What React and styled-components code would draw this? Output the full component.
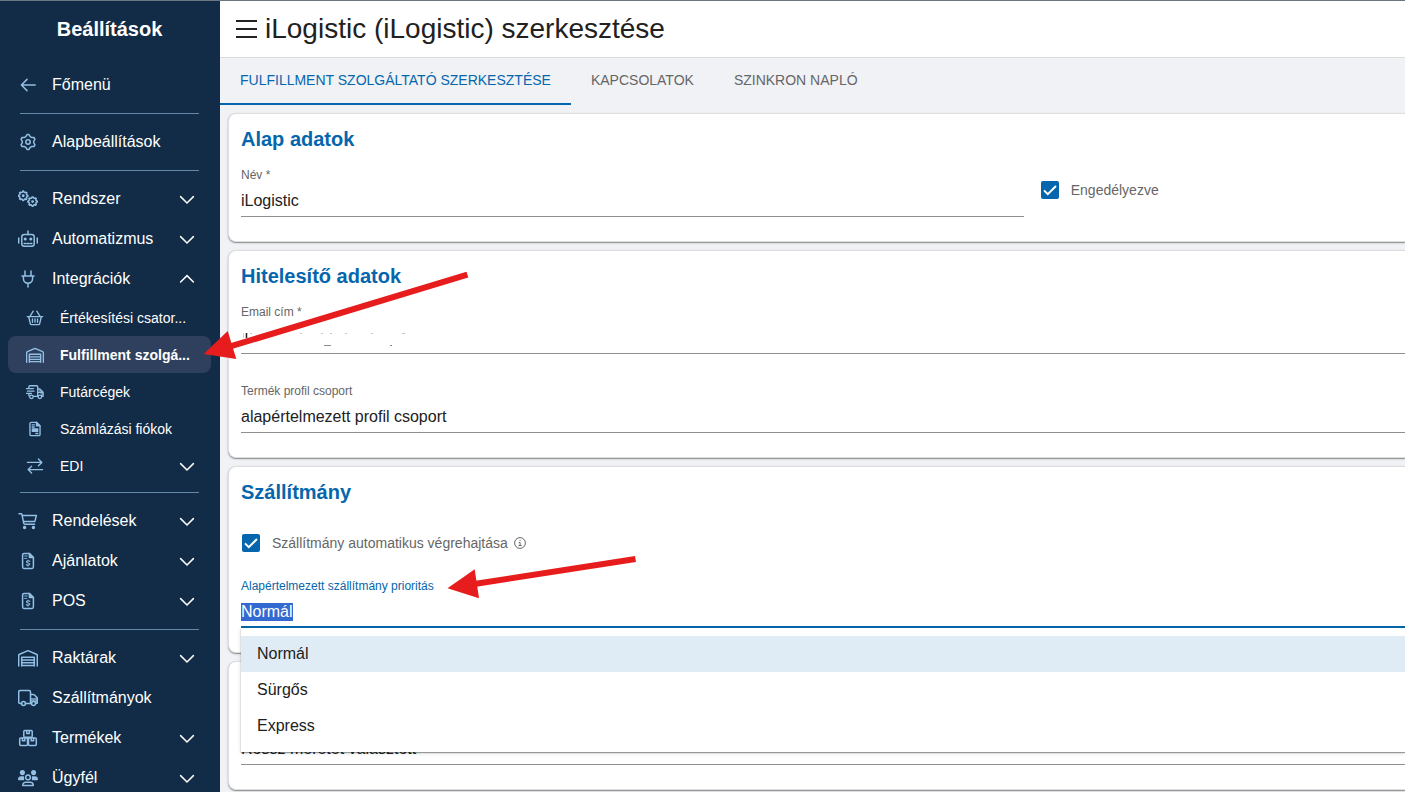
import React, { useEffect, useRef } from "react";
import styled, { createGlobalStyle, css } from "styled-components";

const COLOR = {
  navy: "#122b46",
  navyActive: "#2f3f5e",
  navLine: "#6488a8",
  navIcon: "#93c0e4",
  blue: "#0566ad",
  page: "#f0f2f6",
  text: "#212121",
  gray: "#666",
  line: "#8f8f8f",
  red: "#e71d1d",
}

const FONT = `"Liberation Sans", Arial, sans-serif`

/* ---------- icons, all on a 20x20 grid ---------- */

const gearPoints = (cx, cy, r, teeth) => {
  const pts = []
  const steps = teeth * 4
  for (let i = 0; i < steps; i++) {
    const radius = i % 4 < 2 ? r : r * 0.77
    const a = ((i - 0.5) / steps) * Math.PI * 2 - Math.PI / 2
    pts.push(`${(cx + radius * Math.cos(a)).toFixed(2)},${(cy + radius * Math.sin(a)).toFixed(2)}`)
  }
  return pts.join(" ")
}

const ICONS = {
  back: <path d="M17.2 10H3.4M9 4.4 3.4 10 9 15.6" />,
  gear: <>
    <polygon points={gearPoints(10, 10, 7.5, 6)} />
    <circle cx="10" cy="10" r="2.2" />
  </>,
  gears: <>
    <polygon points={gearPoints(5.2, 6.8, 4.7, 8)} />
    <circle cx="5.2" cy="6.8" r=".7" fill="currentColor" />
    <polygon points={gearPoints(14.6, 12.6, 4.7, 8)} />
    <circle cx="14.6" cy="12.6" r=".7" fill="currentColor" />
  </>,
  robot: <>
    <rect x="3.8" y="5.6" width="12.4" height="11.6" rx="2.4" />
    <path d="M10 2v3.4M.7 9v5M19.3 9v5M6.2 14.4h1.6M9.2 14.4h1.6M12.2 14.4h1.6" />
    <circle cx="7.2" cy="10" r=".8" fill="currentColor" />
    <circle cx="12.8" cy="10" r=".8" fill="currentColor" />
  </>,
  plug: <path d="M7 2v4.6M13 2v4.6M4 7h12M5.4 7v2.6a4.6 4.6 0 0 0 9.2 0V7M10 14.4V18" />,
  basket: <>
    <path d="M1.4 8.4h17.2M3 8.6l1.8 7.6a1.5 1.5 0 0 0 1.4 1.2h7.6a1.5 1.5 0 0 0 1.4-1.2L17 8.6M4.4 8.2 8 2.4M15.6 8.2 12 2.4" />
    <path d="M7.2 11v3.8M10 11v3.8M12.8 11v3.8" />
  </>,
  warehouse: <path d="M.7 18V7.6c0-.6.4-1.1.9-1.3L10 2.6l8.4 3.7c.5.2.9.7.9 1.3V18M3.7 18V9.2h12.6V18M3.7 12h12.6M3.7 14.8h12.6M3.7 17.4h12.6" />,
  truckFast: <>
    <path d="M3.2 5.2V4.2c0-.7.5-1.2 1.2-1.2h7.4c.7 0 1.2.5 1.2 1.2v10.6H8.4M3.2 11.6v2.6M.6 6.2h7.6M1.6 9h7.4M.6 11.6h5.4" />
    <path d="M13 6.6h2.4l3.6 3.6v4.6h-1.2M13 10.4h6" fill="currentColor" fillOpacity=".55" />
    <circle cx="6" cy="15.4" r="2" />
    <circle cx="15.4" cy="15.4" r="2" />
  </>,
  invoice: <>
    <path d="M11.6 2.6H5.8c-.8 0-1.4.6-1.4 1.4v12c0 .8.6 1.4 1.4 1.4h8.4c.8 0 1.4-.6 1.4-1.4V6.6z" />
    <path d="M11.6 2.6v4h4z" fill="currentColor" />
    <path d="M6.8 5.4h2.4M6.8 7.8h2.4M11 15h2.2" />
    <rect x="7" y="10" width="6" height="2.6" fill="currentColor" />
  </>,
  exchange: <path d="M1.6 6h16M13.8 2.2 17.6 6l-3.8 3.8M18.4 14h-16M6.2 10.2 2.4 14l3.8 3.8" />,
  cart: <>
    <path d="M1 2.7h2.1c.4 0 .7.3.8.7l1.9 9c.1.5.5.8 1 .8h9.800M4.200 4.400h14.200l-1.600 6.200H5.500" />
    <circle cx="6.600" cy="16.600" r="1" fill="currentColor" />
    <circle cx="15.400" cy="16.600" r="1" fill="currentColor" />
  </>,
  fileDollar: <>
    <path d="M11.4 2.6H6c-.8 0-1.4.6-1.4 1.4v12c0 .8.6 1.4 1.4 1.4h8c.8 0 1.4-.6 1.4-1.4V6.6z" />
    <path d="M11.4 2.6v4h4z" fill="currentColor" />
    <path d="M6.6 5h2.6M6.6 7.4h2.2" strokeWidth=".9" />
    <path d="M11.9 10.2c-1-.5-3.4-.6-3.4.7 0 1.4 3.3.7 3.3 2.2 0 1.3-2.4 1.2-3.5.6M10.1 9v.8M10.1 14.1v.9" strokeWidth="1.1" />
  </>,
  truck: <>
    <path d="M3.6 15.4H2c-.7 0-1.3-.6-1.3-1.3V3.9c0-.7.6-1.3 1.3-1.3h9.2c.7 0 1.3.6 1.3 1.3v11.5H7.4" />
    <path d="M12.6 6.4h2.6c.4 0 .7.2 1 .4l2.6 2.6c.3.3.5.6.5 1v4.8h-.8M12.6 15.4h1" />
    <path d="M13 10h6.2v4.8h-1.4a2.8 2.8 0 0 0-4.8-.6z" fill="currentColor" fillOpacity=".7" stroke="none" />
    <circle cx="5.5" cy="15.6" r="2" />
    <circle cx="15.5" cy="15.6" r="2" />
  </>,
  boxes: <>
    <rect x="5.8" y="2.6" width="8.4" height="6.6" rx="1" />
    <rect x="1.7" y="10" width="7.8" height="7.4" rx="1" />
    <rect x="10.5" y="10" width="7.8" height="7.4" rx="1" />
    <path d="M8.7 2.8v2.6h2.6V2.8M4.4 10.2v2.6h2.4v-2.6M13.2 10.2v2.6h2.4v-2.6" />
  </>,
  users: <>
    <circle cx="4.4" cy="4.6" r="1.8" fill="currentColor" />
    <circle cx="15.6" cy="4.6" r="1.8" fill="currentColor" />
    <path d="M.8 11.4c0-1.6 1-2.5 2.4-2.5h2.2v2.5zM19.2 11.4c0-1.6-1-2.5-2.4-2.5h-2.2v2.5z" fill="currentColor" />
    <circle cx="10" cy="9.4" r="2.3" />
    <path d="M4.700 17.400c0-2 1.400-3.200 3.200-3.200h4.200c1.800 0 3.200 1.200 3.200 3.200z" />
  </>,
}

const Svg = styled.svg`
  display: block;
  flex: none;
  fill: none;
  stroke: currentColor;
  stroke-width: 1.5;
  stroke-linecap: round;
  stroke-linejoin: round;
`

const Icon = ({ name, size = 20 }) =>
  <Svg width={size} height={size} viewBox="0 0 20 20" aria-hidden="true">{ICONS[name]}</Svg>

const Chevron = ({ open }) =>
  <Arrow width="16" height="16" viewBox="0 0 16 16" aria-hidden="true">
    <path d={open ? "M1.600 11 8 4.600 14.400 11" : "M1.600 5.600 8 12l6.400-6.400"} />
  </Arrow>

/* ---------- navigation ---------- */

const NAV = [
  [{ icon: "back", label: "Főmenü" }],
  [{ icon: "gear", label: "Alapbeállítások" }],
  [
    { icon: "gears", label: "Rendszer", expandable: true },
    { icon: "robot", label: "Automatizmus", expandable: true },
    {
      icon: "plug", label: "Integrációk", expandable: true, open: true,
      children: [
        { icon: "basket", label: "Értékesítési csator..." },
        { icon: "warehouse", label: "Fulfillment szolgá...", active: true },
        { icon: "truckFast", label: "Futárcégek" },
        { icon: "invoice", label: "Számlázási fiókok" },
        { icon: "exchange", label: "EDI", expandable: true },
      ],
    },
  ],
  [
    { icon: "cart", label: "Rendelések", expandable: true },
    { icon: "fileDollar", label: "Ajánlatok", expandable: true },
    { icon: "fileDollar", label: "POS", expandable: true },
  ],
  [
    { icon: "warehouse", label: "Raktárak", expandable: true },
    { icon: "truck", label: "Szállítmányok" },
    { icon: "boxes", label: "Termékek", expandable: true },
    { icon: "users", label: "Ügyfél", expandable: true },
  ],
]

const NavEntry = ({ item, sub }) => {
  const content = <>
    <NavIcon><Icon name={item.icon} size={sub ? 18 : 20} /></NavIcon>
    <NavLabel>{item.label}</NavLabel>
    {item.expandable ? <Chevron open={item.open} /> : null}
  </>
  return (
    <li>
      {item.expandable
        ? <NavButton type="button" $sub={sub} aria-expanded={!!item.open}>{content}</NavButton>
        : <NavLink href="#" $sub={sub} $active={item.active}>{content}</NavLink>}
      {item.children
        ? <NavList>{item.children.map(c => <NavEntry key={c.label} item={c} sub />)}</NavList>
        : null}
    </li>
  )
}

const Sidebar = () =>
  <Side>
    <SideTitle>Beállítások</SideTitle>
    <nav>
      {NAV.map((group, i) =>
        <NavGroup key={i}>{group.map(item => <NavEntry key={item.label} item={item} />)}</NavGroup>
      )}
    </nav>
  </Side>

/* ---------- form parts ---------- */

const TextField = ({ id, label, value }) =>
  <Field>
    <Label htmlFor={id}>{label}</Label>
    <Input id={id} type="text" defaultValue={value} />
  </Field>

const CheckField = ({ id, label, children }) =>
  <CheckRow>
    <CheckBox>
      <input id={id} type="checkbox" defaultChecked />
      <svg width="18" height="18" viewBox="0 0 18 18" aria-hidden="true">
        <path d="M3 9.400 6.800 13.200 15 5" fill="none" stroke="#fff" strokeWidth="2" />
      </svg>
    </CheckBox>
    <CheckLabel htmlFor={id}>{label}</CheckLabel>
    {children}
  </CheckRow>

const InfoIcon = () =>
  <svg width="12" height="12" viewBox="0 0 12 12" fill="none" stroke={COLOR.gray} aria-hidden="true">
    <circle cx="6" cy="6" r="5.400" />
    <path d="M4.800 5.400h1.300v3M4.600 8.500h3M5.600 3.400h1" />
  </svg>

// the address is wiped out, only the tips of the letters are left
const ErasedText = () =>
  <Erased width="180" height="16" viewBox="0 0 180 16" aria-hidden="true">
    <path d="M2.500 1v5" stroke="#b9d6ee" />
    <path d="M5.500 1v5" stroke="#222" strokeWidth="1.500" />
    <path d="M9 1.500h2M59 1.500h2M80 1.500h2M89 1.500h2M104 1.500h2M130 1.500h2M161 1.500h3" stroke="#c6c6c6" />
    <path d="M83 13.500h7M149 13.500h2" stroke="#8a8a8a" />
  </Erased>

const PRIORITIES = ["Normál", "Sürgős", "Express"]

const PriorityField = () => {
  const input = useRef(null)

  useEffect(() => {
    input.current.focus({ preventScroll: true })
    input.current.select()
  }, [])

  return (
    <Field>
      <Label htmlFor="priority" $focused>Alapértelmezett szállítmány prioritás</Label>
      <Input
        id="priority"
        ref={input}
        type="text"
        role="combobox"
        aria-expanded="true"
        aria-controls="priority-list"
        defaultValue={PRIORITIES[0]}
        $focused
      />
      <Options id="priority-list" role="listbox">
        {PRIORITIES.map((p, i) =>
          <Option key={p} role="option" aria-selected={i === 0}>{p}</Option>
        )}
      </Options>
    </Field>
  )
}

const RedArrows = () =>
  <Overlay width="660" height="620" viewBox="0 0 660 620" aria-hidden="true">
    <g fill={COLOR.red} stroke={COLOR.red}>
      <path d="M231 346.200 467.400 274.700" strokeWidth="6" />
      <path d="M203.700 354 227.700 331l8.600 28z" stroke="none" />
      <path d="M476 583.800 635.500 559" strokeWidth="6" />
      <path d="M447.500 588.300 474.700 569.300l4.300 29z" stroke="none" />
    </g>
  </Overlay>

export default function App () {
  return (
    <>
      <GlobalStyle />
      <Page>
        <Sidebar />
        <Main>
          <Header>
            <MenuButton type="button" aria-label="Menü">
              <svg width="21" height="18" viewBox="0 0 21 18" aria-hidden="true">
                <path d="M0 1h21M0 9h21M0 17h21" stroke={COLOR.text} strokeWidth="2" />
              </svg>
            </MenuButton>
            <PageTitle>iLogistic (iLogistic) szerkesztése</PageTitle>
          </Header>
          <Tabs role="tablist">
            <Tab type="button" role="tab" aria-selected="true" $active>Fulfillment szolgáltató szerkesztése</Tab>
            <Tab type="button" role="tab" aria-selected="false">Kapcsolatok</Tab>
            <Tab type="button" role="tab" aria-selected="false">Szinkron napló</Tab>
          </Tabs>
          <Cards>
            <Card>
              <CardTitle>Alap adatok</CardTitle>
              <Columns>
                <TextField id="name" label="Név *" value="iLogistic" />
                <CheckField id="enabled" label="Engedélyezve" />
              </Columns>
            </Card>
            <Card>
              <CardTitle>Hitelesítő adatok</CardTitle>
              <Stack $gap={29}>
                <Field>
                  <Label htmlFor="email">Email cím *</Label>
                  <Input id="email" type="email" />
                  <ErasedText />
                </Field>
                <TextField id="profile" label="Termék profil csoport" value="alapértelmezett profil csoport" />
              </Stack>
            </Card>
            <Card>
              <CardTitle>Szállítmány</CardTitle>
              <Stack $gap={12}>
                <CheckField id="auto" label="Szállítmány automatikus végrehajtása">
                  <InfoIcon />
                </CheckField>
                <PriorityField />
              </Stack>
            </Card>
            <Card $untitled>
              <Input type="text" aria-label="Rossz méretet választott" defaultValue="Rossz méretet választott" />
            </Card>
          </Cards>
        </Main>
        <RedArrows />
      </Page>
    </>
  )
}

const GlobalStyle = createGlobalStyle`
  *, *::before, *::after {
    box-sizing: border-box;
  }
  body {
    margin: 0;
    font-family: ${FONT};
    color: ${COLOR.text};
    background: ${COLOR.page};
  }
  button, input {
    font-family: inherit;
  }
`

const Page = styled.div`
  position: relative;
  display: flex;
  height: 100vh;
  overflow: hidden;
  border-top: 1px solid #6b7883;
`

const Side = styled.aside`
  flex: none;
  width: 220px;
  padding: 0 9px 0 8px;
  overflow: hidden;
  background: ${COLOR.navy};
  color: #fff;
`

const SideTitle = styled.h2`
  margin: 0 0 8px;
  font-size: 20px;
  line-height: 56px;
  text-align: center;
`

const NavList = styled.ul`
  margin: 0;
  padding: 0;
  list-style: none;
`

const NavGroup = styled(NavList)`
  & + &::before {
    content: "";
    display: block;
    height: 1px;
    margin: 8px 12px;
    background: ${COLOR.navLine};
  }
`

const navItem = css`
  display: flex;
  align-items: center;
  width: 100%;
  height: ${props => props.$sub ? "37px" : "40px"};
  padding: 0 16px 0 ${props => props.$sub ? "18px" : "10px"};
  border: 0;
  border-radius: 8px;
  background: ${props => props.$active ? COLOR.navyActive : "transparent"};
  color: #fff;
  font-size: ${props => props.$sub ? "14px" : "16px"};
  font-weight: ${props => props.$active ? "bold" : "normal"};
  text-align: left;
  text-decoration: none;
  cursor: pointer;
`

const NavLink = styled.a`${navItem}`

const NavButton = styled.button`${navItem}`

const NavIcon = styled.span`
  flex: none;
  width: 34px;
  color: ${COLOR.navIcon};
`

const NavLabel = styled.span`
  flex: 1;
  white-space: nowrap;
`

const Arrow = styled.svg`
  flex: none;
  fill: none;
  stroke: #fff;
  stroke-width: 1.5;
  stroke-linecap: round;
`

const Main = styled.main`
  flex: 1;
  min-width: 0;
  overflow: hidden;
`

const Header = styled.header`
  display: flex;
  align-items: center;
  gap: 8px;
  height: 57px;
  padding: 0 16px;
  background: #fff;
  border-bottom: 1px solid #dcdcdc;
`

const MenuButton = styled.button`
  padding: 0;
  border: 0;
  background: none;
  line-height: 0;
  cursor: pointer;
`

const PageTitle = styled.h1`
  margin: 0;
  font-size: 28px;
  font-weight: normal;
`

const Tabs = styled.div`
  display: flex;
  height: 47px;
`

const Tab = styled.button`
  padding: 0 20px 2px;
  border: 0;
  border-bottom: 2px solid ${props => props.$active ? COLOR.blue : "transparent"};
  background: none;
  color: ${props => props.$active ? COLOR.blue : COLOR.gray};
  font-size: 14px;
  text-transform: uppercase;
  cursor: pointer;
`

const Cards = styled.div`
  display: flex;
  flex-direction: column;
  gap: 8px;
  padding: 8px 0 8px 8px;
`

const Card = styled.section`
  padding: ${props => props.$untitled ? "74px" : "10px"} 0 24px 12px;
  border: 1px solid #dedede;
  border-right: 0;
  border-radius: 8px 0 0 8px;
  background: #fff;
  box-shadow: 0 1px 1px rgba(0, 0, 0, .35), 0 1px 3px rgba(0, 0, 0, .12);
`

const CardTitle = styled.h2`
  margin: 0 0 13px;
  color: ${COLOR.blue};
  font-size: 20px;
  line-height: 30px;
`

const Columns = styled.div`
  display: grid;
  grid-template-columns: 15fr 7fr;
  align-items: start;
  gap: 16px;
`

const Stack = styled.div`
  display: flex;
  flex-direction: column;
  gap: ${props => props.$gap}px;
`

const Field = styled.div`
  position: relative;
`

const Label = styled.label`
  display: block;
  margin-bottom: 5px;
  color: ${props => props.$focused ? COLOR.blue : COLOR.gray};
  font-size: 12px;
  line-height: 16px;
`

const Input = styled.input`
  display: block;
  width: 100%;
  height: 29px;
  padding: 0 0 ${props => props.$focused ? "2px" : "3px"};
  border: 0;
  border-bottom: ${props => props.$focused ? `2px solid ${COLOR.blue}` : `1px solid ${COLOR.line}`};
  border-radius: 0;
  outline: 0;
  background: none;
  color: ${COLOR.text};
  font-size: 16px;

  &::selection {
    background: rgba(51, 103, 209, .99);
    color: #fff;
  }
`

const Erased = styled.svg`
  position: absolute;
  left: 0;
  bottom: 6px;
  fill: none;
`

const CheckRow = styled.div`
  display: flex;
  align-items: center;
  height: 46px;
`

const CheckBox = styled.span`
  display: grid;
  width: 18px;
  height: 18px;
  margin: 0 12px 0 1px;

  > * {
    grid-area: 1 / 1;
  }
  input {
    appearance: none;
    width: 18px;
    height: 18px;
    margin: 0;
    border-radius: 2px;
    background: ${COLOR.blue};
  }
  svg {
    pointer-events: none;
  }
`

const CheckLabel = styled.label`
  margin-right: 6px;
  color: ${COLOR.gray};
  font-size: 14px;
`

const Options = styled.ul`
  position: absolute;
  z-index: 2;
  top: 100%;
  left: 0;
  right: 0;
  margin: 0;
  padding: 8px 0;
  list-style: none;
  background: #fff;
  box-shadow: 0 1px 1px rgba(0, 0, 0, .35), 0 1px 4px rgba(0, 0, 0, .15);
`

const Option = styled.li`
  padding: 0 16px;
  font-size: 16px;
  line-height: 36px;
  cursor: pointer;

  &[aria-selected="true"] {
    background: #e0ecf5;
  }
`

const Overlay = styled.svg`
  position: absolute;
  z-index: 3;
  top: -1px;
  left: 0;
  pointer-events: none;
`
